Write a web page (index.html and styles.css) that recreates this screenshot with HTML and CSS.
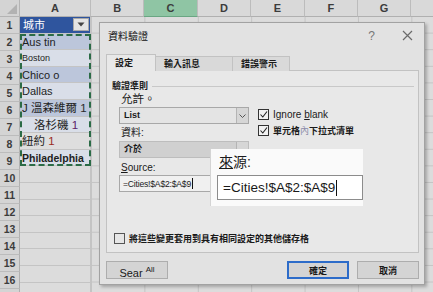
FILE: index.html
```html
<!DOCTYPE html>
<html lang="zh-Hant">
<head>
    <meta charset="UTF-8">
    <meta name="viewport" content="width=device-width, initial-scale=1.0">
    <title>資料驗證</title>
    <link rel="stylesheet" href="styles.css">
</head>
<body>

    <div class="sheet">
        <div class="corner"></div>
        <div class="col-heads">
            <div class="col-head wide">A</div>
            <div class="col-head">B</div>
            <div class="col-head selected">C</div>
            <div class="col-head">D</div>
            <div class="col-head">E</div>
            <div class="col-head">F</div>
            <div class="col-head">G</div>
            <div class="col-head"></div>
        </div>
        <div class="row-heads">
            <div class="row-head">1</div>
            <div class="row-head">2</div>
            <div class="row-head">3</div>
            <div class="row-head">4</div>
            <div class="row-head">5</div>
            <div class="row-head">6</div>
            <div class="row-head">7</div>
            <div class="row-head">8</div>
            <div class="row-head">9</div>
            <div class="row-head">10</div>
            <div class="row-head">11</div>
            <div class="row-head">12</div>
            <div class="row-head">13</div>
            <div class="row-head">14</div>
            <div class="row-head">15</div>
            <div class="row-head">16</div>
            <div class="row-head">17</div>
        </div>
        <div class="col-a">
            <div class="cell table-head">
                <span>城市</span>
                <span class="filter-btn">
                    <svg width="8" height="5" viewBox="0 0 8 5"><path d="M0.5 0.5 L7.5 0.5 L4 4.5 Z" fill="#444"/></svg>
                </span>
            </div>
            <div class="marquee">
                <div class="cell band">Aus tin</div>
                <div class="cell light small">Boston</div>
                <div class="cell band">Chico o</div>
                <div class="cell light">Dallas</div>
                <div class="cell band cjk">J 溫森維爾 <span class="num">1</span></div>
                <div class="cell light cjk indent">洛杉磯 <span class="num purple">1</span></div>
                <div class="cell plain cjk">紐約 <span class="num red">1</span></div>
                <div class="cell light bold">Philadelphia</div>
            </div>
            <div class="cell"></div>
            <div class="cell"></div>
            <div class="cell"></div>
            <div class="cell"></div>
            <div class="cell"></div>
            <div class="cell"></div>
            <div class="cell"></div>
            <div class="cell"></div>
        </div>
        <div class="empty"></div>
    </div>

    <!-- 資料驗證對話方塊 -->
    <div class="dialog">
        <div class="titlebar">
            <span class="title">資料驗證</span>
            <span class="help">?</span>
            <svg class="close" width="11" height="11" viewBox="0 0 11 11"><path d="M1 1 L10 10 M10 1 L1 10" stroke="#6a6a6a" stroke-width="1.2"/></svg>
        </div>

        <div class="tabs">
            <div class="tab active">設定</div>
            <div class="tab tab-input">輸入訊息</div>
            <div class="tab tab-error">錯誤警示</div>
        </div>

        <div class="panel">
            <div class="group-label">
                <span>驗證準則</span>
                <span class="group-line"></span>
            </div>

            <div class="criteria">
                <div class="left-col">
                    <div class="field-label big">允許。</div>
                    <div class="select">
                        <span class="select-text">List</span>
                        <span class="select-btn">
                            <svg width="7" height="4" viewBox="0 0 7 4"><path d="M0.5 0.5 L3.5 3.5 L6.5 0.5" fill="none" stroke="#555"/></svg>
                        </span>
                    </div>
                    <div class="field-label">資料:</div>
                    <div class="select disabled">
                        <span class="select-text cjk-small">介於</span>
                        <span class="select-btn"></span>
                    </div>
                    <div class="field-label"><span class="u">S</span>ource:</div>
                    <div class="source-input">=Cities!$A$2:$A$9<span class="caret"></span></div>
                </div>

                <div class="right-col">
                    <label class="check-row">
                        <span class="checkbox">
                            <svg width="9" height="9" viewBox="0 0 9 9"><path d="M1.5 4.5 L3.8 7 L8 1.5" fill="none" stroke="#222" stroke-width="1.1"/></svg>
                        </span>
                        <span>Ignore <span class="u">b</span>lank</span>
                    </label>
                    <label class="check-row">
                        <span class="checkbox">
                            <svg width="9" height="9" viewBox="0 0 9 9"><path d="M1.5 4.5 L3.8 7 L8 1.5" fill="none" stroke="#222" stroke-width="1.1"/></svg>
                        </span>
                        <span class="cjk-small">單元格<span class="faint">內</span>下拉式清單</span>
                    </label>
                </div>
            </div>

            <label class="check-row apply-row">
                <span class="checkbox"></span>
                <span class="cjk-small">將這些變更套用到具有相同設定的其他儲存格</span>
            </label>
        </div>

        <div class="buttons">
            <button class="btn">Sear <sup>All</sup></button>
            <span class="spacer"></span>
            <button class="btn primary">確定</button>
            <button class="btn">取消</button>
        </div>
    </div>

    <!-- 放大的來源欄位 -->
    <div class="callout">
        <div class="callout-label"><span class="u">來</span>源:</div>
        <div class="callout-input">=Cities!$A$2:$A$9<span class="caret big-caret"></span></div>
    </div>

</body>
</html>
```

FILE: styles.css
```css
* {
    box-sizing: border-box;
}

body {
    margin: 0;
    width: 433px;
    height: 292px;
    overflow: hidden;
    position: relative;
    background-color: #dcdcdc;
    font-family: "Liberation Sans", "Noto Sans CJK TC", sans-serif;
    color: #1a1a1a;
}

/* 工作表 */
.sheet {
    display: grid;
    grid-template-columns: 20px 71px 1fr;
    grid-template-rows: 17px 1fr;
    height: 292px;
}

.corner {
    position: relative;
    background-color: #d4d4d4;
    border-right: 1px solid #b4b4b4;
    border-bottom: 1px solid #b4b4b4;
}

.corner::after {
    content: "";
    position: absolute;
    right: 2px;
    bottom: 2px;
    border-left: 10px solid transparent;
    border-bottom: 10px solid #b2b2b2;
}

.col-heads {
    grid-column: 2 / 4;
    display: flex;
}

.col-head {
    flex: 0 0 53.4px;
    background-color: #d9d9d9;
    border-right: 1px solid #bcbcbc;
    border-bottom: 1px solid #b0b0b0;
    text-align: center;
    font-size: 11px;
    font-weight: bold;
    line-height: 17px;
    color: #3c3c3c;
}

.col-head.wide {
    flex-basis: 71px;
}

.col-head.selected {
    background-color: #8fc5a4;
    border-bottom-color: #6aa683;
}

.row-heads {
    display: flex;
    flex-direction: column;
}

.row-head {
    flex: 0 0 16.6px;
    background-color: #d4d4d4;
    border-right: 1px solid #b0b0b0;
    border-bottom: 1px solid #bcbcbc;
    text-align: center;
    font-size: 10.5px;
    font-weight: bold;
    line-height: 16px;
    color: #3c3c3c;
}

.col-a {
    display: flex;
    flex-direction: column;
}

.marquee {
    display: flex;
    flex-direction: column;
    outline: 2px dashed #2b6b46;
    outline-offset: -2px;
}

.cell {
    flex: 0 0 16.6px;
    border-right: 1px solid #c4c4c4;
    border-bottom: 1px solid #c4c4c4;
    padding-left: 2px;
    font-size: 11px;
    line-height: 16px;
    white-space: nowrap;
    overflow: hidden;
    color: #1e1e1e;
}

.table-head {
    display: flex;
    align-items: center;
    justify-content: space-between;
    padding: 0 1px 0 3px;
    background-color: #2f559e;
    color: #fff;
    font-size: 11px;
}

.filter-btn {
    display: flex;
    align-items: center;
    justify-content: center;
    width: 16px;
    height: 13px;
    background-color: #e4e4e4;
    border: 1px solid #a8a8a8;
}

.band {
    background-color: #bcc6db;
}

.light {
    background-color: #d9dee8;
}

.plain {
    background-color: #dedede;
}

.small {
    font-size: 9px;
}

.bold {
    font-weight: bold;
    font-size: 10.5px;
}

.cjk {
    font-size: 11.5px;
}

.indent {
    padding-left: 14px;
}

.num {
    color: #2a2a2a;
}

.num.purple {
    color: #5b2168;
}

.num.red {
    color: #9a2c1e;
}

.empty {
    background-image:
        linear-gradient(to right, #c4c4c4 1px, transparent 1px),
        linear-gradient(to bottom, transparent 15.6px, #c4c4c4 15.6px);
    background-size: 53.4px 100%, 100% 16.6px;
}

/* 對話方塊 */
.dialog {
    position: absolute;
    left: 99px;
    top: 22px;
    width: 326px;
    height: 263px;
    display: flex;
    flex-direction: column;
    padding: 0 5px 6px 6px;
    background-color: #e2e2e2;
    border: 1px solid #a2a2a2;
    box-shadow: 2px 2px 3px rgba(0, 0, 0, 0.25);
}

.titlebar {
    display: flex;
    align-items: center;
    height: 25px;
    flex: none;
    padding-left: 2px;
}

.title {
    font-size: 10px;
    color: #111;
}

.help {
    margin-left: auto;
    font-size: 12px;
    color: #777;
}

.close {
    margin: 0 6px 0 27px;
}

.tabs {
    display: flex;
    align-items: flex-end;
    height: 17px;
    margin-top: 6px;
    flex: none;
    position: relative;
    z-index: 1;
    margin-bottom: -1px;
}

.tab {
    height: 15px;
    padding-left: 8px;
    font-size: 9px;
    font-weight: bold;
    line-height: 14px;
    background-color: #d9d9d9;
    border: 1px solid #c2c2c2;
    border-bottom: none;
}

.tab.active {
    width: 50px;
    height: 17px;
    line-height: 16px;
    background-color: #e8e8e8;
}

.tab-input {
    width: 77px;
    border-left: none;
}

.tab-error {
    width: 57px;
    border-left: none;
}

.panel {
    height: 183px;
    flex: none;
    display: flex;
    flex-direction: column;
    background-color: #e8e8e8;
    border: 1px solid #c2c2c2;
}

.group-label {
    display: flex;
    align-items: center;
    padding: 9px 4px 0 5px;
    font-size: 9px;
    font-weight: bold;
    line-height: 12px;
}

.group-line {
    flex: 1;
    height: 1px;
    margin-left: 4px;
    background-color: #c8c8c8;
}

.criteria {
    display: flex;
}

.left-col {
    display: flex;
    flex-direction: column;
    width: 130px;
    margin-left: 12px;
}

.field-label {
    height: 17px;
    display: flex;
    align-items: flex-end;
    padding: 0 0 2px 2px;
    font-size: 10px;
}

.field-label.big {
    height: 15px;
    padding-bottom: 1px;
    font-size: 11.5px;
}

.u {
    text-decoration: underline;
}

.select {
    display: flex;
    align-items: stretch;
    height: 17px;
    background-color: #e4e4e4;
    border: 1px solid #a8a8a8;
}

.select.disabled {
    background-color: #d0d0d0;
    border-color: #bdbdbd;
}

.select-text {
    flex: 1;
    padding-left: 4px;
    font-size: 9px;
    font-weight: bold;
    line-height: 15px;
}

.select-btn {
    width: 12px;
    display: flex;
    align-items: center;
    justify-content: center;
    background-color: #d6d6d6;
    border-left: 1px solid #b4b4b4;
}

.cjk-small {
    font-size: 9px;
    font-weight: bold;
}

.faint {
    color: #8a8aa8;
    font-weight: normal;
}

.source-input {
    display: flex;
    align-items: center;
    height: 17px;
    padding-left: 3px;
    background-color: #f0f0f0;
    border: 1px solid #a8a8a8;
    font-size: 8.6px;
    letter-spacing: -0.2px;
    white-space: nowrap;
}

.caret {
    display: inline-block;
    width: 1px;
    height: 11px;
    margin-left: 1px;
    background-color: #111;
}

.right-col {
    display: flex;
    flex-direction: column;
    margin: 14px 0 0 9px;
}

.check-row {
    display: flex;
    align-items: center;
    height: 16px;
    font-size: 10px;
}

.checkbox {
    display: flex;
    align-items: center;
    justify-content: center;
    width: 11px;
    height: 11px;
    margin-right: 4px;
    background-color: #f2f2f2;
    border: 1px solid #333;
}

.apply-row {
    margin: auto 0 6px 7px;
}

.apply-row .checkbox {
    border-color: #555;
    background-color: #e6e6e6;
}

.buttons {
    display: flex;
    margin-top: 8px;
    height: 18px;
    flex: none;
}

.spacer {
    flex: 1;
}

.btn {
    width: 62px;
    height: 18px;
    padding: 0;
    margin: 0;
    background-color: #d4d4d4;
    border: 1px solid #adadad;
    font-family: "Liberation Sans", "Noto Sans CJK TC", sans-serif;
    font-size: 9px;
    font-weight: bold;
    color: #1a1a1a;
}

.btn:first-child {
    font-size: 11px;
    font-weight: normal;
    line-height: 16px;
}

.btn sup {
    font-size: 8px;
}

.btn.primary {
    border: 2px solid #2d6cc9;
    margin-right: 8px;
}

/* 放大的來源欄位 */
.callout {
    position: absolute;
    left: 210px;
    top: 149px;
    width: 153px;
    height: 57px;
    padding-left: 6px;
    background-color: #fafafa;
    border-left: 1px solid #d4d4d4;
}

.callout-label {
    height: 26px;
    padding: 5px 0 0 2px;
    font-size: 14px;
    line-height: 16px;
}

.callout-input {
    display: flex;
    align-items: center;
    height: 25px;
    padding-left: 5px;
    background-color: #fff;
    border: 1px solid #8c8c8c;
    font-size: 13.5px;
    white-space: nowrap;
}

.big-caret {
    height: 16px;
    margin-left: 1px;
}
```
